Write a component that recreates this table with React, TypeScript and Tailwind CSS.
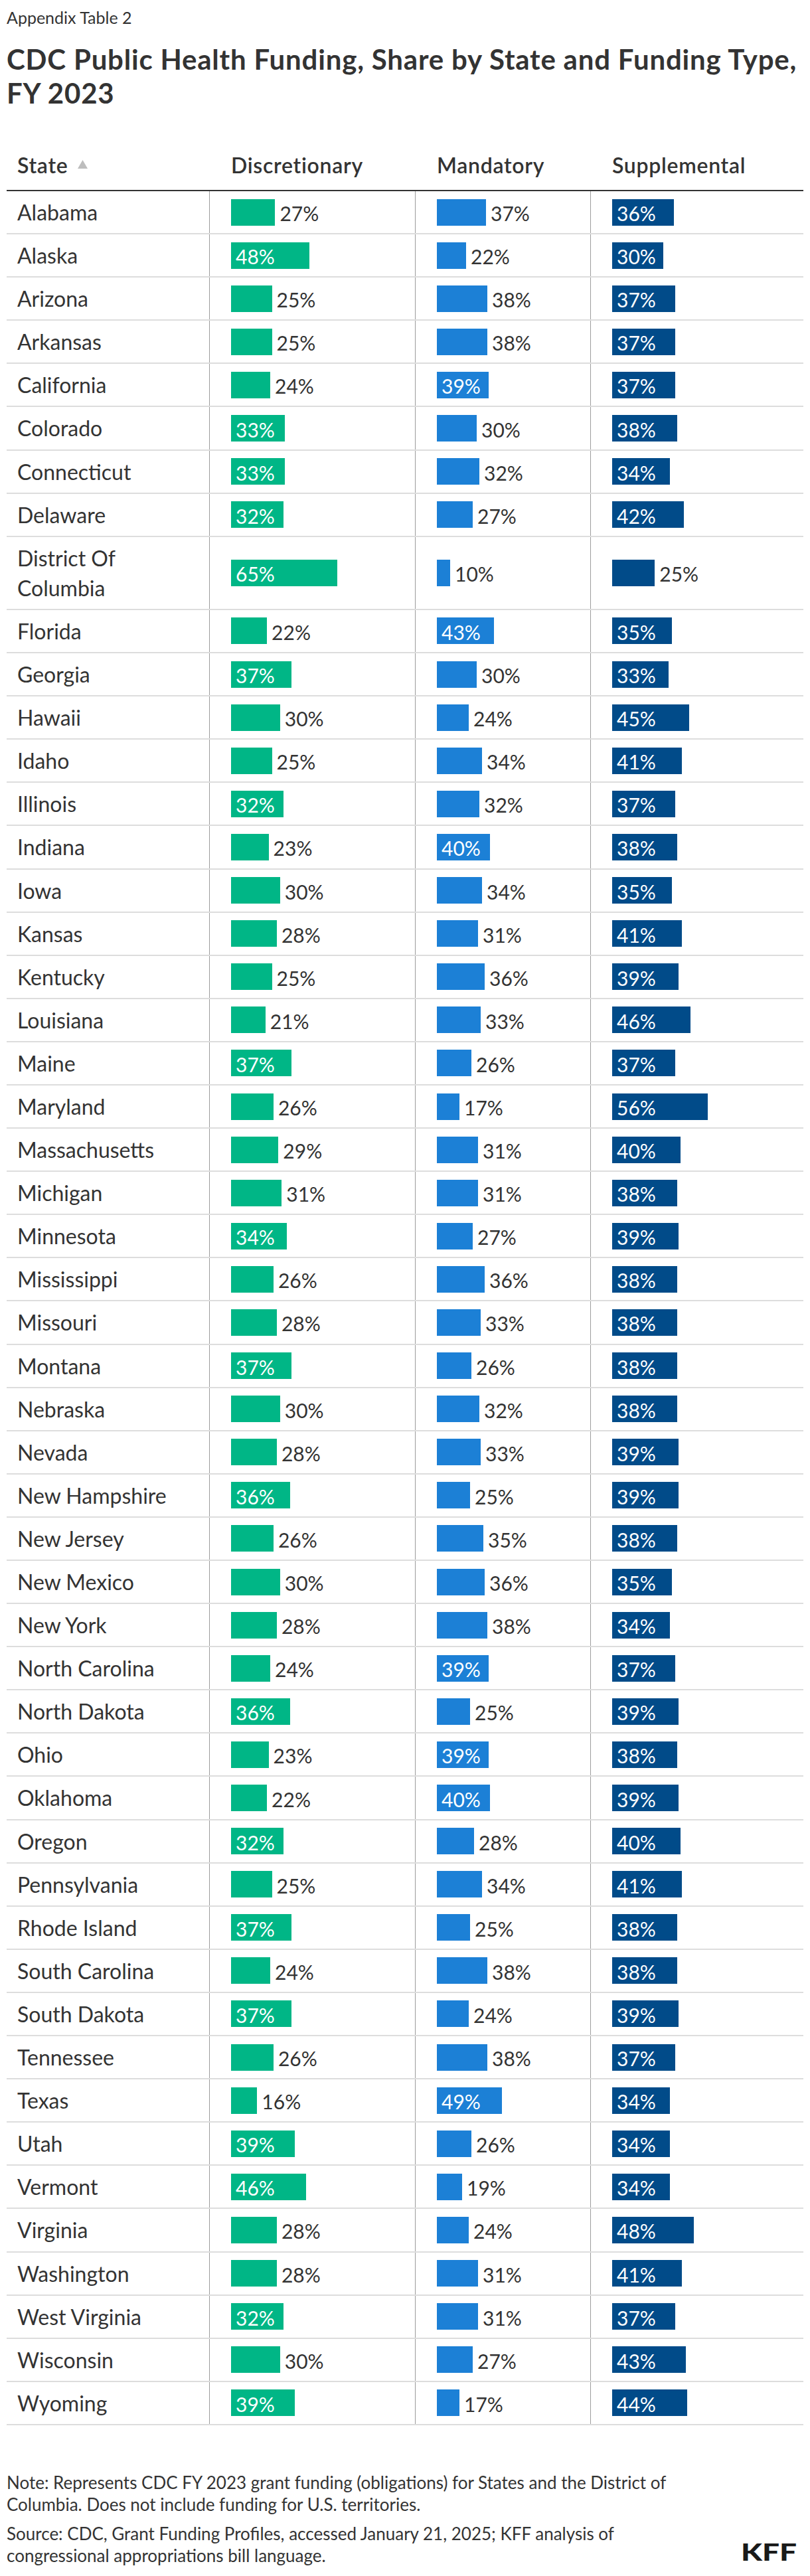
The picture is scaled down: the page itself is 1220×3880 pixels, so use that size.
import React from "react";

type Row = [string, number, number, number];

const rows: Row[] = [
  ["Alabama", 27, 37, 36],
  ["Alaska", 48, 22, 30],
  ["Arizona", 25, 38, 37],
  ["Arkansas", 25, 38, 37],
  ["California", 24, 39, 37],
  ["Colorado", 33, 30, 38],
  ["Connecticut", 33, 32, 34],
  ["Delaware", 32, 27, 42],
  ["District Of Columbia", 65, 10, 25],
  ["Florida", 22, 43, 35],
  ["Georgia", 37, 30, 33],
  ["Hawaii", 30, 24, 45],
  ["Idaho", 25, 34, 41],
  ["Illinois", 32, 32, 37],
  ["Indiana", 23, 40, 38],
  ["Iowa", 30, 34, 35],
  ["Kansas", 28, 31, 41],
  ["Kentucky", 25, 36, 39],
  ["Louisiana", 21, 33, 46],
  ["Maine", 37, 26, 37],
  ["Maryland", 26, 17, 56],
  ["Massachusetts", 29, 31, 40],
  ["Michigan", 31, 31, 38],
  ["Minnesota", 34, 27, 39],
  ["Mississippi", 26, 36, 38],
  ["Missouri", 28, 33, 38],
  ["Montana", 37, 26, 38],
  ["Nebraska", 30, 32, 38],
  ["Nevada", 28, 33, 39],
  ["New Hampshire", 36, 25, 39],
  ["New Jersey", 26, 35, 38],
  ["New Mexico", 30, 36, 35],
  ["New York", 28, 38, 34],
  ["North Carolina", 24, 39, 37],
  ["North Dakota", 36, 25, 39],
  ["Ohio", 23, 39, 38],
  ["Oklahoma", 22, 40, 39],
  ["Oregon", 32, 28, 40],
  ["Pennsylvania", 25, 34, 41],
  ["Rhode Island", 37, 25, 38],
  ["South Carolina", 24, 38, 38],
  ["South Dakota", 37, 24, 39],
  ["Tennessee", 26, 38, 37],
  ["Texas", 16, 49, 34],
  ["Utah", 39, 26, 34],
  ["Vermont", 46, 19, 34],
  ["Virginia", 28, 24, 48],
  ["Washington", 28, 31, 41],
  ["West Virginia", 32, 31, 37],
  ["Wisconsin", 30, 27, 43],
  ["Wyoming", 39, 17, 44],
];

function BarCell({
  value,
  scale,
  threshold,
  barClass,
}: {
  value: number;
  scale: number;
  threshold: number;
  barClass: string;
}) {
  const inside = value >= threshold;
  return (
    <div className="flex items-center border-l border-[#9c9c9c] pl-[32px]">
      <div
        className={`flex h-[40px] items-center ${barClass}`}
        style={{ width: value * scale }}
      >
        {inside && (
          <span className="pl-[7px] pt-[3px] text-[30px] leading-none text-white">
            {value}%
          </span>
        )}
      </div>
      {!inside && (
        <span className="pl-[7px] pt-[3px] text-[30px] leading-none text-[#333]">
          {value}%
        </span>
      )}
    </div>
  );
}

export default function App() {
  return (
    <div className="w-[1220px] bg-white px-[10px] pt-[11px] pb-[14px] font-['Lato',sans-serif] text-[#333]">
      <div className="text-[25px] leading-[30px] text-[#333]">Appendix Table 2</div>
      <h1 className="mt-[23px] text-[42px] font-bold leading-[51px] tracking-[0.8px] text-[#333]">
        <span className="whitespace-nowrap">
          CDC Public Health Funding, Share by State and Funding Type,
        </span>
        <br />
        FY 2023
      </h1>

      <div className="mt-[60px]">
        <div className="grid grid-cols-[305px_310px_264px_321px] border-b-2 border-[#333] pb-[15px] text-[32px] font-semibold leading-[45px] tracking-[0.7px]">
          <div className="flex items-center pl-[16px]">
            <span>State</span>
            <svg
              className="ml-[15px] mt-[-2px]"
              width="15"
              height="13"
              viewBox="0 0 15 13"
            >
              <polygon points="7.5,0 15,13 0,13" fill="#bdbdbd" />
            </svg>
          </div>
          <div className="pl-[33px]">Discretionary</div>
          <div className="pl-[33px]">Mandatory</div>
          <div className="pl-[33px]">Supplemental</div>
        </div>

        {rows.map(([name, d, m, s]) => (
          <div
            key={name}
            className="grid grid-cols-[305px_310px_264px_321px] border-b-2 border-[#dddddd]"
          >
            <div className="py-[9px] pl-[16px] pr-[10px] text-[32px] leading-[45.1px]">
              {name}
            </div>
            <BarCell value={d} scale={2.46} threshold={32} barClass="bg-[#00b686]" />
            <BarCell value={m} scale={2.0} threshold={39} barClass="bg-[#1c80d6]" />
            <BarCell value={s} scale={2.57} threshold={30} barClass="bg-[#014b89]" />
          </div>
        ))}
      </div>

      <div className="mt-[70px] flex items-end justify-between">
        <div className="text-[26px] leading-[33px] text-[#333]">
          <p>
            Note: Represents CDC FY 2023 grant funding (obligations) for States and the District of
            <br />
            Columbia. Does not include funding for U.S. territories.
          </p>
          <p className="mt-[11px]">
            Source: CDC, Grant Funding Profiles, accessed January 21, 2025; KFF analysis of
            <br />
            congressional appropriations bill language.
          </p>
        </div>
        <svg
          width="84"
          height="30"
          viewBox="0 0 84 30"
          className="mb-[6px] mr-[10px] overflow-visible"
        >
          <text
            x="0"
            y="27"
            textLength="84"
            lengthAdjust="spacingAndGlyphs"
            fontFamily="Lato, 'DejaVu Sans', sans-serif"
            fontWeight="900"
            fontSize="36"
            fill="#1a1a1a"
          >
            KFF
          </text>
        </svg>
      </div>
    </div>
  );
}
